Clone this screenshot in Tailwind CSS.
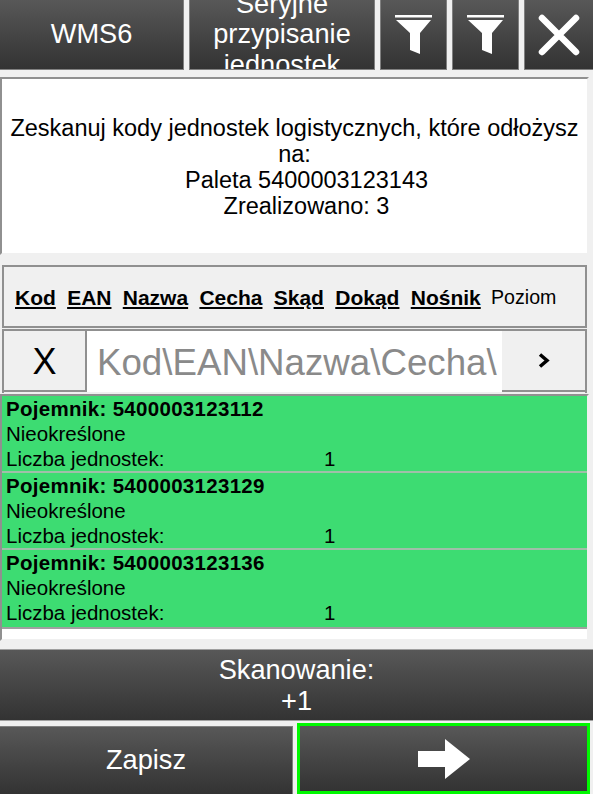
<!DOCTYPE html>
<html lang="en">
  <head>
    <meta charset="UTF-8" />
    <title>WMS6</title>
    <script src="https://cdn.jsdelivr.net/npm/@tailwindcss/browser@4"></script>
  </head>
  <body class="bg-[#f0f0f0] font-['Liberation_Sans',Arial,sans-serif] overflow-hidden">
    <main class="w-[593px] h-[794px] flex flex-col overflow-hidden">
      <!-- top bar -->
      <div class="h-[70px] flex gap-[5px] shrink-0 text-white text-[27.2px] leading-[30.5px] text-center">
        <div class="w-[184px] border-b border-r border-[#808080] bg-gradient-to-b from-[#585858] to-[#333333] flex items-center justify-center">WMS6</div>
        <div class="w-[186px] border border-t-0 border-[#808080] bg-gradient-to-b from-[#585858] to-[#333333] flex items-center justify-center overflow-hidden">
          <span class="shrink-0">Seryjne<br />przypisanie<br />jednostek</span>
        </div>
        <div class="w-[67px] border border-t-0 border-[#808080] bg-gradient-to-b from-[#585858] to-[#333333] flex items-center justify-center">
          <svg width="38" height="40" viewBox="0 0 38 40" fill="white"><rect x="0" y="0" width="37" height="2.5" /><path d="M1 5H36L25 18V39L15 35V18Z" /></svg>
        </div>
        <div class="w-[67px] border border-t-0 border-[#808080] bg-gradient-to-b from-[#585858] to-[#333333] flex items-center justify-center">
          <svg width="38" height="40" viewBox="0 0 38 40" fill="white"><rect x="0" y="0" width="37" height="2.5" /><path d="M1 5H36L25 18V39L15 35V18Z" /></svg>
        </div>
        <div class="w-[69px] border-b border-l border-[#808080] bg-gradient-to-b from-[#585858] to-[#333333] flex items-center justify-center">
          <svg width="42" height="42" viewBox="0 0 42 42" fill="none" stroke="white" stroke-width="6.5" stroke-linecap="round"><path d="M4 4L38 38M38 4L4 38" /></svg>
        </div>
      </div>
      <!-- message -->
      <div class="mt-[7px] w-[589px] h-[178px] shrink-0 bg-white border-2 border-t-[#909090] border-l-[#909090] border-r-[#f0f0f0] border-b-[#f0f0f0] flex items-center justify-center text-center text-black text-[23.5px] leading-[26px] px-1">
        <p class="pt-[2px]">Zeskanuj kody jednostek logistycznych, które odłożysz na:<span class="block pl-[24px]">Paleta 5400003123143</span><span class="block pl-[24px]">Zrealizowano: 3</span></p>
      </div>
      <!-- sort columns -->
      <div class="mt-[10px] w-[585px] h-[63px] ml-[2px] shrink-0 border-2 border-[#909090] flex items-center pl-[11px] pt-[2px] text-[21px] text-black font-bold gap-[11.3px]">
        <span class="underline underline-offset-2">Kod</span>
        <span class="underline underline-offset-2">EAN</span>
        <span class="underline underline-offset-2">Nazwa</span>
        <span class="underline underline-offset-2">Cecha</span>
        <span class="underline underline-offset-2">Skąd</span>
        <span class="underline underline-offset-2">Dokąd</span>
        <span class="underline underline-offset-2">Nośnik</span>
        <span class="font-normal text-[19.6px] -ml-[1px]">Poziom</span>
      </div>
      <!-- search -->
      <div class="mt-[1px] ml-[2px] w-[585px] h-[64px] shrink-0 border-2 border-[#909090] border-b-0 flex">
        <div class="w-[83px] h-[61px] pt-[2px] border-r-2 border-b-2 border-[#909090] flex items-center justify-center text-[36px] text-black">X</div>
        <div class="flex-1 h-[61px] pt-[2px] bg-white flex items-center pl-[10px] text-[36.7px] text-[#8a8a8a] overflow-hidden whitespace-nowrap">Kod\EAN\Nazwa\Cecha\</div>
        <div class="w-[83px] h-[61px] border-b-2 border-[#909090] flex items-center justify-center">
          <svg width="12" height="15" viewBox="0 0 12 15" fill="none" stroke="black" stroke-width="3.5"><path d="M2 1.5L9 7.5L2 13.5" /></svg>
        </div>
      </div>
      <!-- list -->
      <div class="mt-[1px] w-[589px] h-[247px] shrink-0 bg-white border-2 border-t-[#909090] border-l-[#909090] border-r-[#f0f0f0] border-b-[#f0f0f0] text-[20.5px] leading-[25px] text-black">
        <div class="h-[77px] bg-[#3ddc72] border-b-2 border-[#9fbfa9] pl-[4px]">
          <div class="font-bold tracking-[0.3px]">Pojemnik: 5400003123112</div>
          <div>Nieokreślone</div>
          <div class="flex"><span class="w-[318px]">Liczba jednostek:</span><span>1</span></div>
        </div>
        <div class="h-[77px] bg-[#3ddc72] border-b-2 border-[#9fbfa9] pl-[4px]">
          <div class="font-bold tracking-[0.3px]">Pojemnik: 5400003123129</div>
          <div>Nieokreślone</div>
          <div class="flex"><span class="w-[318px]">Liczba jednostek:</span><span>1</span></div>
        </div>
        <div class="h-[79px] bg-[#3ddc72] border-b-2 border-[#a0a0a0] pl-[4px]">
          <div class="font-bold tracking-[0.3px]">Pojemnik: 5400003123136</div>
          <div>Nieokreślone</div>
          <div class="flex"><span class="w-[318px]">Liczba jednostek:</span><span>1</span></div>
        </div>
      </div>
      <!-- scan -->
      <div class="mt-[8px] h-[72px] shrink-0 border-t border-b border-[#a0a0a0] bg-gradient-to-b from-[#585858] to-[#333333] flex items-center justify-center text-center text-white text-[27.2px] leading-[31px]">
        <p>Skanowanie:<br />+1</p>
      </div>
      <!-- bottom buttons -->
      <div class="mt-[2px] flex-1 flex gap-[4px] text-white text-[27.2px]">
        <div class="w-[293px] mt-[3px] border-r border-t border-[#808080] bg-gradient-to-b from-[#585858] to-[#333333] flex items-center justify-center">Zapisz</div>
        <div class="w-[293px] border-[3px] border-[#00f800] bg-gradient-to-b from-[#585858] to-[#333333] flex items-center justify-center">
          <svg width="52" height="40" viewBox="0 0 52 40" fill="white"><path d="M0 12H27V0L52 20L27 40V28H0Z" /></svg>
        </div>
      </div>
    </main>
  </body>
</html>
